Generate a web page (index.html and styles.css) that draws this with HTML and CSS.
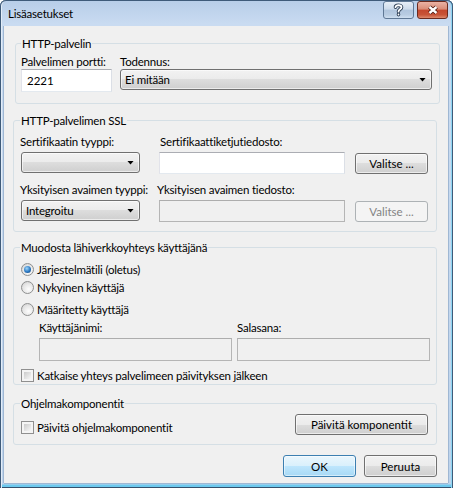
FILE: index.html
```html
<!DOCTYPE html>
<html lang="fi">
<head>
    <meta charset="UTF-8">
    <title>Lisäasetukset</title>
    <link rel="stylesheet" href="styles.css">
</head>
<body>

<div class="window">
    <div class="titlebar">
        <span class="title">Lisäasetukset</span>
        <div class="caption">
            <span class="cap-btn help">
                <svg width="13" height="14" viewBox="0 0 13 14">
                    <path class="glyph-out" d="M3.5 4.2 C3.5 1.6 9.5 1.6 9.5 4.2 C9.5 6.4 6.5 6.2 6.5 8.6 M6.5 11.4 L6.5 11.6"/>
                    <path class="glyph-in" d="M3.5 4.2 C3.5 1.6 9.5 1.6 9.5 4.2 C9.5 6.4 6.5 6.2 6.5 8.6 M6.5 11.4 L6.5 11.6"/>
                </svg>
            </span>
            <span class="cap-btn close">
                <svg width="14" height="10" viewBox="0 0 14 10">
                    <path class="glyph-out" d="M3.5 2 L10.5 8 M10.5 2 L3.5 8"/>
                    <path class="glyph-in" d="M3.5 2 L10.5 8 M10.5 2 L3.5 8"/>
                </svg>
            </span>
        </div>
    </div>

    <div class="client">
        <fieldset class="group group-http">
            <legend>HTTP-palvelin</legend>
            <div class="row">
                <div class="field">
                    <label>Palvelimen portti:</label>
                    <input class="edit port" type="text" value="2221">
                </div>
                <div class="field">
                    <label>Todennus:</label>
                    <div class="combo auth"><span>Ei mitään</span><i class="arrow"></i></div>
                </div>
            </div>
        </fieldset>

        <fieldset class="group group-ssl">
            <legend>HTTP-palvelimen SSL</legend>
            <div class="label-row">
                <label class="col-a">Sertifikaatin tyyppi:</label>
                <label class="col-b">Sertifikaattiketjutiedosto:</label>
            </div>
            <div class="control-row">
                <div class="combo type"><span></span><i class="arrow"></i></div>
                <input class="edit file" type="text">
                <button class="btn pick">Valitse ...</button>
            </div>
            <div class="label-row second">
                <label class="col-a">Yksityisen avaimen tyyppi:</label>
                <label class="col-b shift">Yksityisen avaimen tiedosto:</label>
            </div>
            <div class="control-row">
                <div class="combo type"><span>Integroitu</span><i class="arrow"></i></div>
                <input class="edit file" type="text" disabled>
                <button class="btn pick" disabled>Valitse ...</button>
            </div>
        </fieldset>

        <fieldset class="group group-lan">
            <legend>Muodosta lähiverkkoyhteys käyttäjänä</legend>
            <label class="option"><span class="radio checked"></span>Järjestelmätili (oletus)</label>
            <label class="option"><span class="radio"></span>Nykyinen käyttäjä</label>
            <label class="option third"><span class="radio"></span>Määritetty käyttäjä</label>
            <div class="cred">
                <div class="field">
                    <label>Käyttäjänimi:</label>
                    <input class="edit cred-input" type="text" disabled>
                </div>
                <div class="field">
                    <label>Salasana:</label>
                    <input class="edit cred-input" type="password" disabled>
                </div>
            </div>
            <label class="option disconnect"><span class="check"></span>Katkaise yhteys palvelimeen päivityksen jälkeen</label>
        </fieldset>

        <fieldset class="group group-comp">
            <legend>Ohjelmakomponentit</legend>
            <div class="comp-row">
                <label class="option"><span class="check"></span>Päivitä ohjelmakomponentit</label>
                <button class="btn wide">Päivitä komponentit</button>
            </div>
        </fieldset>

        <div class="dialog-buttons">
            <button class="btn default">OK</button>
            <button class="btn">Peruuta</button>
        </div>
    </div>
</div>

</body>
</html>
```

FILE: styles.css
```css
/* Reset */
* {
    margin: 0;
    padding: 0;
    box-sizing: border-box;
}

body {
    font-family: Lato, "Noto Sans", sans-serif;
    font-size: 11.5px;
    letter-spacing: -0.2px;
    line-height: 15px;
    color: #000;
    background: #fff;
}

/* Ikkunan kehys */
.window {
    display: flex;
    flex-direction: column;
    width: 453px;
    height: 488px;
    border-radius: 6px 6px 0 0;
    background: linear-gradient(#b7cde8, #c9dbf1 24px, #c4d7ee 60%, #bdd3ec calc(100% - 4px), #6cc9ee calc(100% - 3px), #6cc9ee calc(100% - 1px), #35506c calc(100% - 1px));
    box-shadow: inset 1px 0 0 #3f5b7a, inset -1px 0 0 #3f5b7a, inset 0 1px 0 #3f5b7a, inset 2px 0 0 #e3edf8, inset -2px 0 0 #8fd6f2;
}

.titlebar {
    display: flex;
    justify-content: space-between;
    height: 26px;
    padding: 0 5px 0 8px;
}

.title {
    padding-top: 6px;
}

.caption {
    display: flex;
    gap: 3px;
    padding-top: 1px;
}

.cap-btn {
    display: flex;
    align-items: center;
    justify-content: center;
    height: 18px;
    border: 1px solid #5f7895;
    border-radius: 3px;
}

.cap-btn.help {
    width: 31px;
    background: linear-gradient(#e6eef7, #cddbeb 45%, #b0c5dd 50%, #b8cce2 80%, #cfdff0);
}

.cap-btn.close {
    width: 31px;
    border-color: #6b2a1e;
    background: linear-gradient(#eab2a4, #d98c77 45%, #c4472d 50%, #c85437 80%, #de8a6e);
}

.glyph-out {
    fill: none;
    stroke: #2c3e55;
    stroke-width: 3.6;
    stroke-linecap: round;
}

.glyph-in {
    fill: none;
    stroke: #fff;
    stroke-width: 1.8;
    stroke-linecap: round;
}

.close .glyph-out {
    stroke: #4a150d;
    stroke-width: 4.2;
    stroke-linecap: butt;
}

.close .glyph-in {
    stroke-width: 2.4;
    stroke-linecap: butt;
}

.client {
    flex: 1;
    margin: 0 5px 5px 4px;
    background: #f0f0f0;
    box-shadow: -1px 0 0 #9fb7d3, 1px 0 0 #9fb7d3, 0 1px 0 #9fb7d3;
}

/* Ryhmäkehykset */
.group {
    border: 1px solid #d5dfe5;
    border-radius: 3px;
    min-width: 0;
    margin: 0 11px 0 9px;
    padding: 0 8px 0 6px;
}

.group legend {
    padding: 0 1px;
    line-height: 15px;
}

.group-http {
    margin: 10px 8px 0 11px;
    padding: 3px 6px 11px 5px;
}

.group-ssl {
    margin-top: 9px;
    padding-top: 6px;
    padding-bottom: 9px;
}

.group-lan {
    margin-top: 8px;
    padding-top: 5px;
    padding-bottom: 1px;
}

.group-comp {
    margin-top: 11px;
    padding-top: 3px;
    padding-bottom: 8px;
}

label {
    display: block;
    white-space: nowrap;
}

.row {
    display: flex;
    gap: 8px;
}

/* Kontrollit */
.edit {
    display: block;
    height: 23px;
    padding: 0 5px;
    font: inherit;
    color: #000;
    background: #fff;
    border: 1px solid #e3e9ef;
    border-top-color: #abadb3;
    border-left-color: #e2e3ea;
    border-right-color: #dbdfe6;
    outline: none;
}

.edit:disabled {
    background: #f0f0f0;
    border-color: #b5b5b5;
    border-top-color: #adadad;
}

.port {
    width: 91px;
}

.combo {
    display: flex;
    align-items: center;
    justify-content: space-between;
    height: 21px;
    padding: 0 5px 0 4px;
    border: 1px solid #707070;
    border-radius: 3px;
    background: linear-gradient(#f2f2f2, #ebebeb 50%, #dddddd 50%, #cfcfcf);
    box-shadow: inset 0 0 0 1px rgba(255, 255, 255, 0.6);
}

.combo.auth {
    width: 312px;
}

.combo.type {
    width: 119px;
}

.arrow {
    width: 7px;
    height: 4px;
    background: #000;
    clip-path: polygon(0 0, 100% 0, 50% 100%);
}

.btn {
    height: 21px;
    font: inherit;
    color: #000;
    border: 1px solid #707070;
    border-radius: 3px;
    background: linear-gradient(#f2f2f2, #ebebeb 50%, #dddddd 50%, #cfcfcf);
    box-shadow: inset 0 0 0 1px rgba(255, 255, 255, 0.6);
}

.btn:disabled {
    color: #838383;
    border-color: #adb2b5;
    background: #f4f4f4;
    box-shadow: none;
}

.btn.default {
    border-color: #3c7fb1;
    background: linear-gradient(#eaf6fd, #d9f0fc 50%, #bee6fd 50%, #a7d9f5);
    box-shadow: inset 0 0 0 1px rgba(255, 255, 255, 0.5);
}

/* SSL */
.label-row {
    display: flex;
}

.label-row.second {
    margin-top: 8px;
}

.col-a {
    width: 140px;
}

.col-b.shift {
    margin-left: -3px;
}

.control-row {
    display: flex;
    align-items: flex-start;
    margin-top: 3px;
    padding-left: 1px;
}

.control-row .combo {
    margin-right: 19px;
}

.edit.file {
    width: 186px;
    height: 22px;
    margin-right: 10px;
}

.btn.pick {
    width: 73px;
    margin-top: 1px;
}

/* Valinnat */
.option {
    display: flex;
    align-items: center;
    gap: 3px;
    height: 18px;
    padding-left: 1px;
}

.option.third {
    margin-top: 4px;
}

.radio {
    position: relative;
    width: 13px;
    height: 13px;
    border: 1px solid #8e8f8f;
    border-radius: 50%;
    background: radial-gradient(circle at 60% 65%, #fdfdfd, #e6e6e6 55%, #c9c9c9);
}

.radio.checked::after {
    content: "";
    position: absolute;
    left: 2px;
    top: 2px;
    width: 7px;
    height: 7px;
    border-radius: 50%;
    background: radial-gradient(circle at 40% 35%, #9fd6fa, #2a78c2 55%, #0f3c70);
}

.check {
    width: 13px;
    height: 13px;
    padding: 2px;
    border: 1px solid #8f8f8f;
    background: linear-gradient(135deg, #cbcbcb, #f6f6f6) content-box, #f4f4f4;
}

.cred {
    display: flex;
    gap: 5px;
    margin-top: 2px;
    padding-left: 19px;
}

.cred label {
    margin-bottom: 3px;
}

.cred-input {
    width: 193px;
}

.option.disconnect {
    margin-top: 6px;
    height: 16px;
}

.comp-row {
    display: flex;
    justify-content: space-between;
    align-items: flex-start;
}

.comp-row .option {
    margin-top: 4px;
}

.btn.wide {
    width: 133px;
}

.dialog-buttons {
    display: flex;
    justify-content: flex-end;
    gap: 8px;
    margin: 10px 11px 0 0;
}

.dialog-buttons .btn {
    width: 73px;
    height: 22px;
}
```
